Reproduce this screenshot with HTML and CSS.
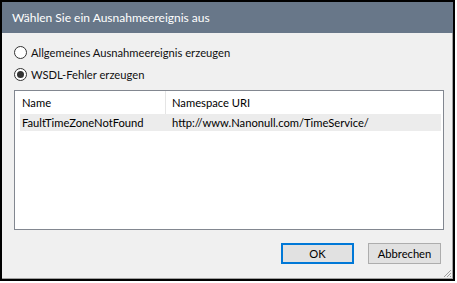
FILE: index.html
```html
<!DOCTYPE html>
<html>
<head>
<meta charset="utf-8">
<link rel="stylesheet" href="styles.css">
</head>
<body>
<div class="window">
  <div class="titlebar">Wählen Sie ein Ausnahmeereignis aus</div>
  <div class="content">
    <label class="radio-row"><span class="radio"></span><span>Allgemeines Ausnahmeereignis erzeugen</span></label>
    <label class="radio-row"><span class="radio checked"></span><span>WSDL-Fehler erzeugen</span></label>
    <div class="list">
      <div class="list-header">
        <div class="col col1">Name</div>
        <div class="col col2">Namespace URI</div>
      </div>
      <div class="list-row">
        <div class="col col1">FaultTimeZoneNotFound</div>
        <div class="col col2">http://www.Nanonull.com/TimeService/</div>
      </div>
    </div>
    <div class="buttons">
      <button class="btn btn-default">OK</button>
      <button class="btn">Abbrechen</button>
    </div>
    <svg class="grip" width="9" height="9" viewBox="0 0 9 9">
      <path d="M8 1 L1 8 M8 4 L4 8 M8 7 L7 8" stroke="#a0a0a0" stroke-width="1" fill="none"/>
    </svg>
  </div>
</div>
</body>
</html>
```
FILE: styles.css
```css
html, body {
  margin: 0;
  padding: 0;
  background: #ffffff;
}
body {
  font-family: "Lato", "Noto Sans", sans-serif;
  font-size: 11.2px;
  color: #000;
}
.window {
  width: 451px;
  height: 277px;
  border: 2px solid #000;
  display: flex;
  flex-direction: column;
}
.titlebar {
  height: 31px;
  line-height: 31px;
  background: #687789;
  color: #fff;
  font-size: 12px;
  padding-left: 10px;
  white-space: nowrap;
}
.content {
  position: relative;
  flex: 1;
  background: #f0f0f0;
  border-right: 1px solid #a0a0a0;
  border-bottom: 1px solid #a0a0a0;
  padding: 11px 0 0 12px;
  display: flex;
  flex-direction: column;
}
.radio-row {
  display: flex;
  align-items: center;
  height: 16px;
  gap: 4px;
  margin-bottom: 6px;
  white-space: nowrap;
  color: #111;
}
.radio {
  box-sizing: border-box;
  width: 13px;
  height: 13px;
  border: 1px solid #333;
  border-radius: 50%;
  background: #fff;
  display: flex;
  align-items: center;
  justify-content: center;
}
.radio.checked::after {
  content: "";
  width: 7px;
  height: 7px;
  border-radius: 50%;
  background: #333;
}
.list {
  box-sizing: border-box;
  margin-top: 2px;
  width: 430px;
  height: 140px;
  border: 1px solid #828790;
  background: #fff;
  padding: 0 2px 0 5px;
}
.list-header {
  display: flex;
  height: 23px;
  align-items: center;
  white-space: nowrap;
}
.list-header .col1 {
  border-right: 1px solid #e5e5e5;
  height: 23px;
  line-height: 23px;
}
.list-row {
  display: flex;
  height: 17px;
  line-height: 17px;
  background: #ececec;
  white-space: nowrap;
}
.col1 {
  box-sizing: border-box;
  width: 146px;
  padding-left: 2px;
}
.col2 {
  padding-left: 6px;
}
.buttons {
  display: flex;
  justify-content: flex-end;
  gap: 14px;
  margin-top: 13px;
  padding-right: 11px;
}
.btn {
  box-sizing: border-box;
  width: 73px;
  height: 21px;
  margin: 0;
  padding: 0;
  background: #e1e1e1;
  border: 1px solid #adadad;
  font-family: "Lato", "Noto Sans", sans-serif;
  font-size: 11.2px;
  color: #000;
}
.btn-default {
  border: 2px solid #0078d7;
}
.grip {
  position: absolute;
  right: 0;
  bottom: 0;
}
```
